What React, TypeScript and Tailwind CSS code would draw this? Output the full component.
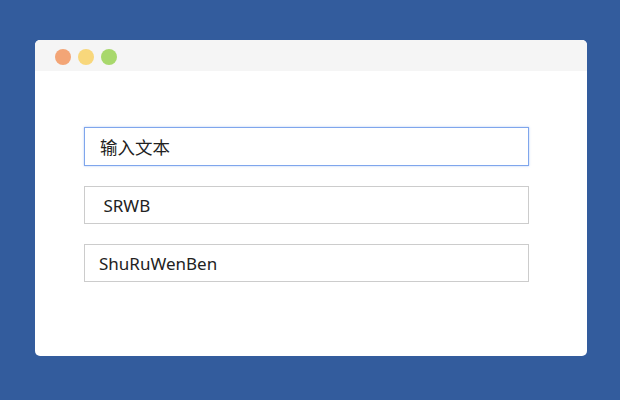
const fields = [
  { value: '输入文本', active: true },
  { value: ' SRWB', active: false },
  { value: 'ShuRuWenBen', active: false },
];

export default function App() {
  return (
    <div
      className="w-[620px] h-[400px] bg-[#335c9d] pt-[40px] pl-[35px]"
      style={{ fontFamily: '"Noto Sans", "Noto Sans CJK SC", sans-serif' }}
    >
      <div className="w-[552px] h-[316px] bg-white rounded-[5px] overflow-hidden flex flex-col">
        {/* Title bar */}
        <div className="h-[31px] bg-[#f5f5f5] flex items-center gap-[7px] pl-[20px] pt-[2px] shrink-0">
          <span className="w-4 h-4 rounded-full bg-[#f3a576]" />
          <span className="w-4 h-4 rounded-full bg-[#f8d77b]" />
          <span className="w-4 h-4 rounded-full bg-[#a8d86c]" />
        </div>

        {/* Inputs */}
        <div className="flex flex-col gap-[20px] pt-[56px] pl-[49px] pr-[58px]">
          {fields.map((f, i) => (
            <input
              key={i}
              readOnly
              defaultValue={f.value}
              className={
                f.active
                  ? 'h-[39px] w-full border border-[#7fa6ec] shadow-[0_0_2px_rgba(100,150,240,0.5)] px-[15px] text-[17.5px] text-[#222] outline-none bg-white'
                  : 'h-[38px] w-full border border-[#cccccc] px-[14px] text-[17px] text-[#222] outline-none bg-white'
              }
            />
          ))}
        </div>
      </div>
    </div>
  );
}
